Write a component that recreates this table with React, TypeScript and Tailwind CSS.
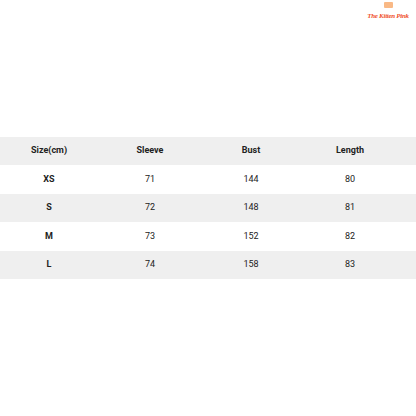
import React from "react";

const rows = [
  { size: "XS", sleeve: 71, bust: 144, length: 80 },
  { size: "S", sleeve: 72, bust: 148, length: 81 },
  { size: "M", sleeve: 73, bust: 152, length: 82 },
  { size: "L", sleeve: 74, bust: 158, length: 83 },
];

export default function App() {
  return (
    <div className="relative w-[416px] h-[416px] bg-white font-['Roboto',sans-serif] text-[#222]">
      {/* logo */}
      <div className="absolute right-[8px] top-[2px] w-[40px] flex flex-col items-center">
        <div className="w-[9px] h-[6px] rounded-[1px] bg-[#f7a868] opacity-80" />
        <div className="mt-[4px] text-[7px] leading-[8px] italic font-semibold text-[#f0522e] font-['Liberation_Serif',serif] tracking-[-0.3px] whitespace-nowrap">
          The Kitten Pink
        </div>
      </div>

      <div className="pt-[137px]">
        <div className="grid grid-cols-[98px_104px_98px_100px_1fr] h-[28px] items-center bg-[#efefef] text-[9px] font-bold">
          <div className="text-center">Size(cm)</div>
          <div className="text-center">Sleeve</div>
          <div className="text-center">Bust</div>
          <div className="text-center">Length</div>
          <div />
        </div>
        {rows.map((r, i) => (
          <div
            key={r.size}
            className={
              "grid grid-cols-[98px_104px_98px_100px_1fr] h-[28.5px] items-center text-[9px] " +
              (i % 2 === 1 ? "bg-[#efefef]" : "bg-white")
            }
          >
            <div className="text-center font-bold">{r.size}</div>
            <div className="text-center">{r.sleeve}</div>
            <div className="text-center">{r.bust}</div>
            <div className="text-center">{r.length}</div>
            <div />
          </div>
        ))}
      </div>
    </div>
  );
}
